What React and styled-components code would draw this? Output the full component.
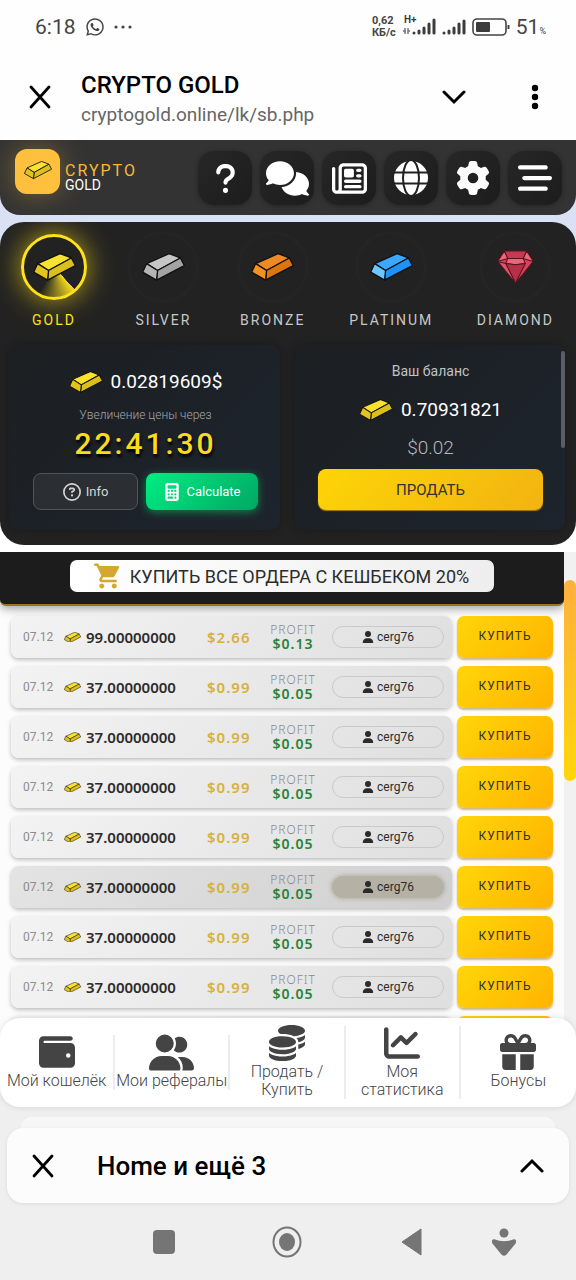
import styled, { createGlobalStyle, css } from "styled-components";
import {
  FaBarsStaggered,
  FaCalculator,
  FaChartLine,
  FaCoins,
  FaComments,
  FaGear,
  FaGift,
  FaQuestion,
  FaRegCircleQuestion,
  FaRegNewspaper,
  FaUser,
  FaUserGroup,
  FaWallet,
  FaWhatsapp,
} from "react-icons/fa6";
import { MdShoppingCart } from "react-icons/md";

const metals = {
  gold: ["#f7e22e", "#dcbf1a", "#e3c41c"],
  silver: ["#c6c6c6", "#a3a3a3", "#b4b4b4"],
  bronze: ["#ee8a22", "#de7410", "#f0921f"],
  platinum: ["#3aa8ff", "#1d93f7", "#6cc6ff"],
};

const orders = [
  { id: 1, amount: "99.00000000", price: "$2.66", profit: "$0.13" },
  { id: 2, amount: "37.00000000", price: "$0.99", profit: "$0.05" },
  { id: 3, amount: "37.00000000", price: "$0.99", profit: "$0.05" },
  { id: 4, amount: "37.00000000", price: "$0.99", profit: "$0.05" },
  { id: 5, amount: "37.00000000", price: "$0.99", profit: "$0.05" },
  { id: 6, amount: "37.00000000", price: "$0.99", profit: "$0.05", pressed: true },
  { id: 7, amount: "37.00000000", price: "$0.99", profit: "$0.05" },
  { id: 8, amount: "37.00000000", price: "$0.99", profit: "$0.05" },
];

const assets = ["gold", "silver", "bronze", "platinum", "diamond"];

const menu = [
  { label: "Мой кошелёк", Icon: FaWallet, size: 36 },
  { label: "Мои рефералы", Icon: FaUserGroup, size: 45 },
  { label: "Продать / Купить", Icon: FaCoins, size: 36 },
  { label: "Моя статистика", Icon: FaChartLine, size: 36 },
  { label: "Бонусы", Icon: FaGift, size: 36 },
];

const Ingot = ({ metal = "gold", width = 43 }) => {
  const [top, side, end] = metals[metal];
  return (
    <svg width={width} viewBox="0 0 130 84" aria-hidden="true">
      <g stroke="#111" strokeWidth="4" strokeLinejoin="round">
        <path d="M14 32 82 2 116 15 47 53Z" fill={top} />
        <path d="M47 53 116 15 128 38 44 82Z" fill={side} />
        <path d="M14 32 47 53 44 82 2 58Z" fill={end} />
      </g>
    </svg>
  );
};

const Diamond = () => (
  <svg width="37" viewBox="0 0 110 102" aria-hidden="true">
    <g stroke="#4d1620" strokeWidth="3" strokeLinejoin="round">
      <path d="M22 3H88L108 34 55 99 2 34Z" fill="#d9405a" />
      <path d="M22 3 32 25 2 34Z" fill="#f0677b" />
      <path d="M88 3 78 25 108 34Z" fill="#f0677b" />
      <path d="M22 3H88L78 25H32Z" fill="#c93851" />
      <path d="M32 25H78L84 40 55 44 26 40Z" fill="#ef6378" />
      <path d="M26 40 55 44 84 40 55 99Z" fill="#b82f48" />
      <path d="M2 34 26 40 55 99Z" fill="#e0556c" />
    </g>
  </svg>
);

const Globe = () => (
  <svg width="34" height="34" viewBox="0 0 34 34" aria-hidden="true">
    <circle cx="17" cy="17" r="17" fill="#fff" />
    <g fill="none" stroke="#222" strokeWidth="2">
      <ellipse cx="17" cy="17" rx="8" ry="18" />
      <path d="M0 11.500H34M0 22.500H34" />
    </g>
  </svg>
);

const Signal = () => (
  <svg width="24" height="16" viewBox="0 0 24 16" aria-hidden="true">
    <path
      d="M2 14v0M7 14v-2M12 14V9M17 14V5M22 14V2"
      stroke="#3c3c3c"
      strokeWidth="3"
      strokeLinecap="round"
    />
  </svg>
);

const MobileData = () => (
  <svg width="34" height="24" viewBox="0 0 34 24" aria-hidden="true">
    <text x="2" y="8" fontSize="10" fontWeight="700" fill="#3c3c3c">
      H+
    </text>
    <path d="M3 13v6M1 16h3M6 13v6M6 16h2" stroke="#777" strokeWidth="1.500" />
    <path
      d="M12 18v0M17 18v-2M22 18v-5M27 18V9M32 18V5"
      stroke="#3c3c3c"
      strokeWidth="3"
      strokeLinecap="round"
    />
  </svg>
);

const Battery = () => (
  <svg width="38" height="20" viewBox="0 0 38 20" aria-hidden="true">
    <rect x="1" y="2" width="33" height="16" rx="4" fill="none" stroke="#444" strokeWidth="1.600" />
    <rect x="4" y="5" width="14" height="10" rx="1" fill="#3c3c3c" />
    <path d="M36.500 8v4" stroke="#444" strokeWidth="2" />
  </svg>
);

const Ellipsis = () => (
  <svg width="18" height="4" viewBox="0 0 18 4" fill="#444" aria-hidden="true">
    <circle cx="2" cy="2" r="1.600" />
    <circle cx="9" cy="2" r="1.600" />
    <circle cx="16" cy="2" r="1.600" />
  </svg>
);

const Cross = () => (
  <svg width="22" height="24" viewBox="0 0 22 24" aria-hidden="true">
    <path d="M2 2 20 22M20 2 2 22" stroke="#000" strokeWidth="2.800" strokeLinecap="round" />
  </svg>
);

const Chevron = ({ up }) => (
  <svg width="24" height="16" viewBox="0 0 24 16" aria-hidden="true">
    <path
      d={up ? "M2 13 12 3 22 13" : "M2 3 12 13 22 3"}
      fill="none"
      stroke="#000"
      strokeWidth="3"
      strokeLinecap="round"
    />
  </svg>
);

const Dots = () => (
  <svg width="8" height="26" viewBox="0 0 8 26" aria-hidden="true">
    <circle cx="4" cy="4" r="3.200" />
    <circle cx="4" cy="13" r="3.200" />
    <circle cx="4" cy="22" r="3.200" />
  </svg>
);

const App = () => {
  return (
    <Page>
      <GlobalStyle />

      <StatusBar>
        <Clock>6:18</Clock>
        <FaWhatsapp size={20} />
        <Ellipsis />
        <StatusRight>
          <Speed>
            0,62
            <br />
            КБ/с
          </Speed>
          <MobileData />
          <Signal />
          <Battery />
          <Percent>
            51<small>%</small>
          </Percent>
        </StatusRight>
      </StatusBar>

      <BrowserBar>
        <IconButton aria-label="Close">
          <Cross />
        </IconButton>
        <PageInfo>
          <h1>CRYPTO GOLD</h1>
          <p>cryptogold.online/lk/sb.php</p>
        </PageInfo>
        <IconButton aria-label="Expand">
          <Chevron />
        </IconButton>
        <IconButton aria-label="More">
          <Dots />
        </IconButton>
      </BrowserBar>

      <Top>
        <Header>
          <Logo>
            <Ingot width={28} />
          </Logo>
          <Brand>
            CRYPTO
            <span>GOLD</span>
          </Brand>
          <Tools>
            <Tool aria-label="Help">
              <FaQuestion size={33} />
            </Tool>
            <Tool aria-label="Chat">
              <FaComments size={43} />
            </Tool>
            <Tool aria-label="News">
              <FaRegNewspaper size={35} />
            </Tool>
            <Tool aria-label="Language">
              <Globe />
            </Tool>
            <Tool aria-label="Settings">
              <FaGear size={34} />
            </Tool>
            <Tool aria-label="Menu">
              <FaBarsStaggered size={34} />
            </Tool>
          </Tools>
        </Header>

        <Wallet>
          <Assets>
            {assets.map((name) => (
              <Asset key={name} $active={name === "gold"}>
                <Coin $active={name === "gold"}>
                  {name === "diamond" ? <Diamond /> : <Ingot metal={name} />}
                </Coin>
                {name.toUpperCase()}
              </Asset>
            ))}
          </Assets>

          <Panels>
            <Panel>
              <Amount>
                <Ingot width={34} />
                0.02819609$
              </Amount>
              <Hint>Увеличение цены через</Hint>
              <Timer>22:41:30</Timer>
              <Actions>
                <Action>
                  <FaRegCircleQuestion size={18} />
                  Info
                </Action>
                <Action $primary>
                  <FaCalculator size={18} />
                  Calculate
                </Action>
              </Actions>
            </Panel>
            <Panel>
              <Label>Ваш баланс</Label>
              <Amount>
                <Ingot width={34} />
                0.70931821
              </Amount>
              <Usd>$0.02</Usd>
              <Sell>ПРОДАТЬ</Sell>
              <PanelThumb />
            </Panel>
          </Panels>
        </Wallet>
      </Top>

      <Market>
        <Orders>
          <Promo>
            <PromoButton>
              <MdShoppingCart size={30} />
              КУПИТЬ ВСЕ ОРДЕРА С КЕШБЕКОМ 20%
            </PromoButton>
          </Promo>
          <List>
            {orders.map(({ id, amount, price, profit, pressed }) => (
              <Order key={id}>
                <Lot $pressed={pressed}>
                  <LotDate>07.12</LotDate>
                  <Ingot width={17} />
                  <LotAmount>{amount}</LotAmount>
                  <Price>{price}</Price>
                  <Profit>
                    <span>PROFIT</span>
                    <b>{profit}</b>
                  </Profit>
                  <Seller href="#seller" $pressed={pressed}>
                    <FaUser size={12} />
                    cerg76
                  </Seller>
                </Lot>
                <Buy>КУПИТЬ</Buy>
              </Order>
            ))}
            <Order>
              <Lot />
              <Buy aria-label="Купить" />
            </Order>
          </List>
        </Orders>
        <Track>
          <Thumb />
        </Track>
      </Market>

      <BottomMenu>
        {menu.map(({ label, Icon, size }) => (
          <MenuItem key={label} href="#menu">
            <MenuIcon>
              <Icon size={size} />
            </MenuIcon>
            {label}
          </MenuItem>
        ))}
      </BottomMenu>

      <Sheets>
        <BackSheet />
        <Sheet>
          <IconButton aria-label="Close tabs">
            <Cross />
          </IconButton>
          <SheetTitle>Home и ещё 3</SheetTitle>
          <IconButton aria-label="Show tabs">
            <Chevron up />
          </IconButton>
        </Sheet>
      </Sheets>

      <SystemNav>
        <IconButton aria-label="Recent">
          <svg width="22" height="24" viewBox="0 0 22 24">
            <rect width="22" height="24" rx="4" fill="#757575" />
          </svg>
        </IconButton>
        <IconButton aria-label="Home screen">
          <svg width="30" height="32" viewBox="0 0 30 32">
            <ellipse cx="15" cy="16" rx="13.500" ry="14.500" fill="none" stroke="#757575" strokeWidth="2" />
            <ellipse cx="15" cy="16" rx="8" ry="9" fill="#757575" />
          </svg>
        </IconButton>
        <IconButton aria-label="Back">
          <svg width="21" height="28" viewBox="0 0 21 28">
            <path d="M20 1V27L1 14Z" fill="#757575" stroke="#757575" strokeLinejoin="round" />
          </svg>
        </IconButton>
        <IconButton aria-label="Accessibility">
          <svg width="26" height="30" viewBox="0 0 26 30">
            <circle cx="13" cy="6" r="4.500" fill="#757575" />
            <path
              d="M3 13Q13 17 23 13Q25 13 24 16L15 27Q13 29 11 27L2 16Q1 13 3 13Z"
              fill="#757575"
              stroke="#757575"
              strokeWidth="1.500"
              strokeLinejoin="round"
            />
          </svg>
        </IconButton>
      </SystemNav>
    </Page>
  );
};

const GlobalStyle = createGlobalStyle`
  * {
    box-sizing: border-box;
  }

  body {
    margin: 0;
    background: #efefef;
    font-family: Roboto, "Noto Sans", sans-serif;
  }

  h1,
  p {
    margin: 0;
  }

  button {
    border: 0;
    padding: 0;
    font-family: inherit;
    cursor: pointer;
  }

  a {
    color: inherit;
    text-decoration: none;
  }

  svg {
    display: block;
    flex-shrink: 0;
  }
`;

const Page = styled.div`
  display: flex;
  flex-direction: column;
  height: 100vh;
  overflow: hidden;
`;

const StatusBar = styled.div`
  display: flex;
  align-items: center;
  gap: 9px;
  height: 54px;
  flex-shrink: 0;
  padding: 0 30px 0 35px;
  background: #fefefe;
  color: #444;
`;

const Clock = styled.span`
  font-size: 21px;
`;

const StatusRight = styled.div`
  display: flex;
  align-items: center;
  gap: 6px;
  margin-left: auto;
`;

const Speed = styled.span`
  font-size: 11px;
  font-weight: 700;
  line-height: 12px;
`;

const Percent = styled.span`
  font-size: 21px;

  small {
    font-size: 9px;
  }
`;

const BrowserBar = styled.header`
  display: flex;
  align-items: center;
  height: 86px;
  flex-shrink: 0;
  padding: 0 37px 0 29px;
  background: #fefefe;
`;

const IconButton = styled.button`
  background: none;
`;

const PageInfo = styled.div`
  flex: 1;
  padding: 6px 0 0 30px;

  h1 {
    font-size: 24px;
    font-weight: 500;
    line-height: 30px;
  }

  p {
    color: #666;
    font-size: 19px;
    line-height: 30px;
  }

  & + button {
    margin-right: 65px;
  }
`;

const Top = styled.div`
  flex-shrink: 0;
  padding-bottom: 7px;
  background: linear-gradient(#dbe1f5 30%, #fff 80%);
`;

const Header = styled.div`
  display: flex;
  align-items: flex-start;
  padding: 9px 14px 10px 15px;
  border-radius: 0 0 20px 20px;
  background: #333;
  overflow: hidden;
`;

const Logo = styled.div`
  display: grid;
  place-items: center;
  width: 45px;
  height: 45px;
  padding-bottom: 2px;
  border-radius: 12px;
  background: #ffc03e;
  box-shadow: 0 0 28px rgba(255, 192, 62, 0.35);
`;

const Brand = styled.div`
  margin: 14px 0 0 5px;
  color: #f9b938;
  font-size: 16px;
  line-height: 16px;
  letter-spacing: 2px;

  span {
    display: block;
    color: #fff;
    font-size: 14px;
    line-height: 12px;
    letter-spacing: 0;
  }
`;

const Tools = styled.div`
  display: flex;
  gap: 8px;
  margin: 2px 0 0 auto;
`;

const Tool = styled.button`
  display: grid;
  place-items: center;
  width: 54px;
  height: 54px;
  border-radius: 16px;
  background: linear-gradient(135deg, #272727, #1c1c1c);
  box-shadow: 0 1px 5px rgba(0, 0, 0, 0.3);
  color: #fff;
`;

const Wallet = styled.section`
  margin-top: 7px;
  padding-bottom: 15px;
  border-radius: 24px;
  background: #222;
  overflow: hidden;
`;

const Assets = styled.div`
  display: flex;
  justify-content: space-between;
  padding: 12px 22px 16px 21px;
`;

const Asset = styled.button`
  display: flex;
  flex-direction: column;
  align-items: center;
  gap: 11px;
  min-width: 66px;
  background: none;
  color: ${({ $active }) => ($active ? "#ffe11c" : "#c8c8c8")};
  font-size: 14px;
  line-height: 18px;
  letter-spacing: 2px;
`;

const Coin = styled.span`
  display: grid;
  place-items: center;
  width: 66px;
  height: 66px;
  border-radius: 50%;
  box-shadow: 0 0 8px rgba(255, 255, 255, 0.04);

  ${({ $active }) =>
    $active &&
    css`
      border: 3px solid #ffe11c;
      background: conic-gradient(#222 137deg, #f5dc1e 138deg, #222 210deg);
      box-shadow: 0 0 28px rgba(255, 221, 20, 0.7);
    `}
`;

const Panels = styled.div`
  display: grid;
  grid-template-columns: 1fr 1fr;
  gap: 14px;
  padding: 0 11px 0 9px;
`;

const Panel = styled.div`
  position: relative;
  display: flex;
  flex-direction: column;
  align-items: center;
  height: 185px;
  padding: 16px 22px 20px 24px;
  border-radius: 10px;
  background: linear-gradient(135deg, #1c1f22, #1d242d);
  box-shadow: 0 0 8px rgba(0, 0, 0, 0.25);
  color: #c8c8c8;
`;

const Amount = styled.div`
  display: flex;
  align-items: center;
  gap: 8px;
  padding: 9px 0;
  color: #fff;
  font-size: 19px;
  line-height: 24px;
`;

const Hint = styled.p`
  margin-top: 4px;
  color: #a3a6aa;
  font-size: 12px;
  font-weight: 300;
  line-height: 16px;
`;

const Timer = styled.div`
  color: #fbdb1e;
  font-size: 30px;
  font-weight: 500;
  line-height: 42px;
  letter-spacing: 3px;
  text-shadow: 1px 3px 3px #000;
`;

const Actions = styled.div`
  display: grid;
  grid-template-columns: 105px 1fr;
  gap: 8px;
  width: 100%;
  margin-top: auto;
`;

const Action = styled.button`
  display: flex;
  align-items: center;
  justify-content: center;
  gap: 5px;
  height: 37px;
  border: 1px solid #50555a;
  border-radius: 8px;
  background: #2b2f33;
  color: #d5d5d5;
  font-size: 13px;

  ${({ $primary }) =>
    $primary &&
    css`
      border: 0;
      background: linear-gradient(135deg, #00ee83, #00a763);
      box-shadow: 0 2px 8px rgba(0, 230, 118, 0.5);
      color: #fff;
    `}
`;

const Label = styled.p`
  margin-bottom: 8px;
  color: #c0c2c5;
  font-size: 14px;
  line-height: 20px;
`;

const Usd = styled.p`
  color: #b5b8bc;
  font-size: 19px;
  font-weight: 300;
  line-height: 34px;
`;

const Sell = styled.button`
  width: 100%;
  height: 41px;
  margin-top: auto;
  border-radius: 8px;
  background: linear-gradient(135deg, #fdd506, #f2b312);
  box-shadow: 0 1px 1px #b07a10;
  color: #333;
  font-size: 15px;
`;

const PanelThumb = styled.div`
  position: absolute;
  top: 6px;
  right: 0;
  width: 4px;
  height: 97px;
  border-radius: 2px;
  background: #5a5e62;
`;

const Market = styled.main`
  display: flex;
  flex: 1;
  min-height: 0;
  background: #fcfcfc;
`;

const Orders = styled.div`
  flex: 1;
  overflow: hidden;
`;

const Promo = styled.div`
  display: flex;
  justify-content: center;
  padding: 8px 0 12px;
  border-bottom: 2px solid #9a741c;
  border-radius: 0 0 6px 6px;
  background: #1c1c1c;
  box-shadow: 0 3px 10px rgba(0, 0, 0, 0.35);
`;

const PromoButton = styled.button`
  display: flex;
  align-items: center;
  gap: 7px;
  height: 32px;
  padding: 0 25px 0 23px;
  border-radius: 7px;
  background: linear-gradient(90deg, #fff, #eee);
  color: #2c2c2c;
  font-size: 18px;

  svg {
    color: #d4a830;
  }
`;

const List = styled.div`
  display: flex;
  flex-direction: column;
  gap: 8px;
  padding: 10px 11px;
`;

const Order = styled.div`
  display: flex;
  gap: 5px;
`;

const Lot = styled.div`
  display: grid;
  grid-template-columns: 41px 22px 1fr 55px 62px 120px;
  align-items: center;
  flex: 1;
  height: 42px;
  padding: 0 8px 0 12px;
  border-radius: 8px;
  background: ${({ $pressed }) =>
    $pressed
      ? "linear-gradient(135deg, #e4e4e4, #cfcfcf)"
      : "linear-gradient(135deg, #f3f3f3, #dfdfdf)"};
  box-shadow: 0 2px 4px rgba(0, 0, 0, 0.25);
`;

const LotDate = styled.span`
  color: #8c8c8c;
  font-size: 12px;
`;

const LotAmount = styled.span`
  color: #2b2b2b;
  font: 600 15px/18px "Noto Sans", sans-serif;
`;

const Price = styled.span`
  color: #d7b13c;
  font: 600 15px/18px "Noto Sans", sans-serif;
  letter-spacing: 1px;
`;

const Profit = styled.span`
  display: flex;
  flex-direction: column;
  align-items: center;
  color: #8a8a8a;
  font: 300 12px/14px "Noto Sans", sans-serif;
  letter-spacing: 1px;

  b {
    color: #28823a;
    font-size: 14px;
    font-weight: 600;
  }
`;

const Seller = styled.a`
  display: flex;
  align-items: center;
  justify-content: center;
  gap: 3px;
  height: 22px;
  margin-left: 8px;
  border: 1px solid #c9c9c9;
  border-radius: 11px;
  color: #2b2b2b;
  font-size: 12px;

  ${({ $pressed }) =>
    $pressed &&
    css`
      border-color: #b5b1a4;
      background: #b5b1a4;
      box-shadow: 0 0 4px 1px #b5b1a4;
    `}
`;

const Buy = styled.button`
  width: 96px;
  height: 42px;
  padding-bottom: 2px;
  border-radius: 7px;
  background: linear-gradient(135deg, #ffd60a, #ffb300);
  box-shadow: 0 2px 2px rgba(150, 100, 0, 0.45);
  color: #333;
  font-size: 12px;
  letter-spacing: 1px;
`;

const Track = styled.div`
  width: 12px;
  padding-top: 28px;
  background: #f1f1f1;
`;

const Thumb = styled.div`
  height: 201px;
  border-radius: 6px;
  background: linear-gradient(#ffb03e, #ffd60a);
`;

const BottomMenu = styled.nav`
  position: relative;
  display: grid;
  grid-template-columns: repeat(5, 1fr);
  align-items: center;
  flex-shrink: 0;
  height: 89px;
  margin-top: -20px;
  border-radius: 20px;
  background: #fff;
  box-shadow: 0 0 6px rgba(0, 0, 0, 0.12);
`;

const MenuItem = styled.a`
  display: flex;
  flex-direction: column;
  align-items: center;
  gap: 3px;
  color: #444;
  font-size: 16px;
  font-weight: 300;
  line-height: 18px;
  text-align: center;

  &:not(:last-child) {
    border-right: 2px solid #ececec;
  }
`;

const MenuIcon = styled.span`
  display: flex;
  align-items: center;
  height: 34px;
`;

const Sheets = styled.div`
  flex-shrink: 0;
  padding: 10px 7px 0;
`;

const BackSheet = styled.div`
  height: 11px;
  margin: 0 14px;
  border-radius: 16px 16px 0 0;
  background: #f7f7f7;
`;

const Sheet = styled.div`
  display: flex;
  align-items: center;
  height: 75px;
  padding: 0 25px;
  border-radius: 16px;
  background: #fcfcfc;
  box-shadow: 0 1px 4px rgba(0, 0, 0, 0.08);
`;

const SheetTitle = styled.span`
  flex: 1;
  padding-left: 43px;
  font-size: 26px;
  font-weight: 500;
`;

const SystemNav = styled.nav`
  display: grid;
  grid-template-columns: 1fr 1fr 1fr 62px;
  flex-shrink: 0;
  justify-items: center;
  align-items: center;
  height: 77px;
  padding: 0 41px 0 102px;
`;

export default App;
